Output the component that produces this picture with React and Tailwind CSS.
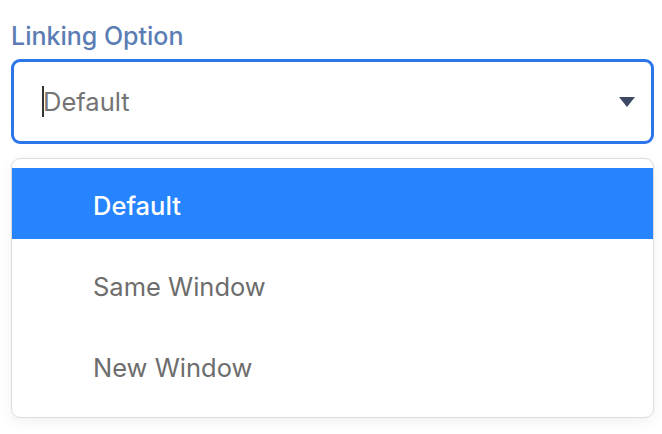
import { useState } from "react";

const options = ["Default", "Same Window", "New Window"];

export default function App() {
	const [value] = useState("Default");

	return (
		<div className="min-h-screen bg-white px-[11px] pt-[19px] font-['Inter',sans-serif]">
			<label className="block text-[25px] font-medium leading-[34px] text-[#5b7db4]">
				Linking Option
			</label>
			<div className="mt-[6px] flex h-[85px] w-[643px] items-center rounded-[9px] border-[3px] border-[#2d75ea] bg-white pl-[28px] pr-[16px]">
				<span className="mr-[-1px] h-[31px] w-[2px] bg-[#333]" />
				<span className="flex-1 pt-[2px] text-[25.5px] text-[#747474]">{value}</span>
				<svg width="16" height="10" viewBox="0 0 16 10">
					<path d="M0 0 H16 L8 10 Z" fill="#3d4962" />
				</svg>
			</div>
			<div className="mt-[14px] flex w-[643px] flex-col gap-[10px] rounded-[9px] border border-[#dcdcdc] bg-white pt-[9px] pb-[16px] shadow-[0_4px_14px_rgba(0,0,0,0.06)]">
				{options.map((opt) => (
					<div
						key={opt}
						className={
							opt === value
								? "flex h-[71px] items-center bg-[#2684ff] pl-[81px] pt-[5px] text-[25.5px] font-medium text-white"
								: "flex h-[71px] items-center pl-[81px] pt-[5px] text-[25.5px] text-[#6d6d6d]"
						}>
						{opt}
					</div>
				))}
			</div>
		</div>
	);
}
